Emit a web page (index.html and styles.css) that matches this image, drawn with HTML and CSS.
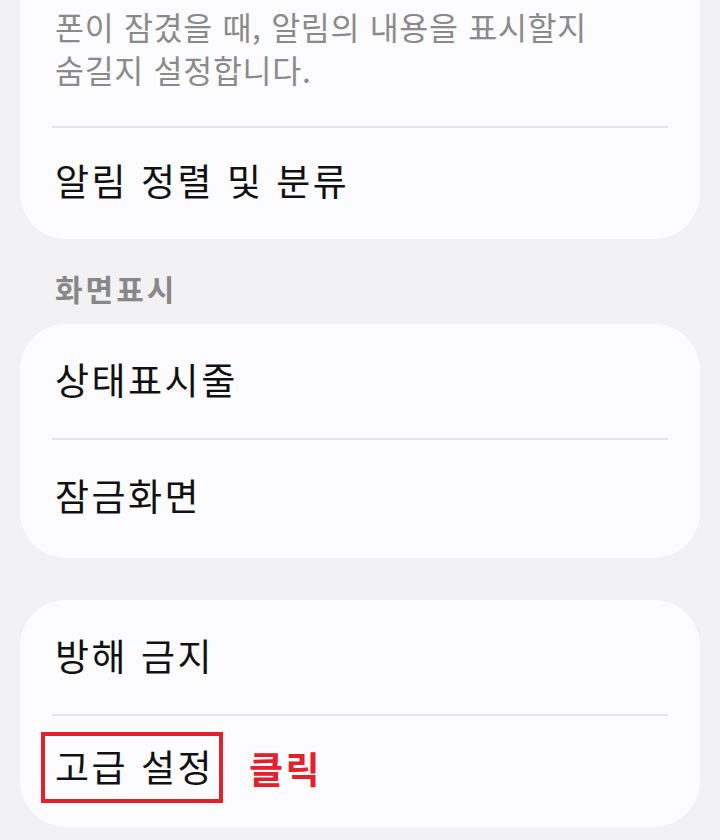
FILE: index.html
```html
<!DOCTYPE html>
<html lang="ko">
<head>
    <meta charset="UTF-8">
    <meta name="viewport" content="width=device-width, initial-scale=1.0">
    <title>알림 설정</title>
    <link rel="stylesheet" href="styles.css">
</head>
<body>
    <div class="screen">
        <section class="card card-top">
            <p class="desc">폰이 잠겼을 때, 알림의 내용을 표시할지<br>숨길지 설정합니다.</p>
            <div class="divider"></div>
            <div class="row row-short">알림 정렬 및 분류</div>
        </section>

        <h2 class="group-title">화면표시</h2>
        <section class="card">
            <div class="row">상태표시줄</div>
            <div class="divider"></div>
            <div class="row">잠금화면</div>
        </section>

        <section class="card card-gap">
            <div class="row">방해 금지</div>
            <div class="divider"></div>
            <div class="row row-short">
                <span class="highlight">고급 설정</span>
                <span class="click-note">클릭</span>
            </div>
        </section>
    </div>
</body>
</html>
```

FILE: styles.css
```css
body {
    margin: 0;
    background-color: #f2f2f4;
    font-family: "Noto Sans CJK KR", "Noto Sans", sans-serif;
}
.screen {
    padding: 0 20px;
}
.card {
    background-color: #fcfcfe;
    border-radius: 46px;
    padding-bottom: 4px;
}
.card-top {
    border-top-left-radius: 0;
    border-top-right-radius: 0;
    padding-top: 5px;
}
.card-gap {
    margin-top: 42px;
}
.desc {
    margin: 0;
    padding: 0 30px 35px 35px;
    font-size: 31.5px;
    letter-spacing: 0.7px;
    line-height: 43px;
    color: #8a8a8a;
}
.divider {
    height: 2px;
    margin: 0 32px;
    background-color: #e5e5e7;
}
.row {
    box-sizing: border-box;
    height: 114px;
    display: flex;
    align-items: center;
    padding: 0 35px 4px;
    font-size: 37px;
    letter-spacing: 2.5px;
    color: #111;
}
.row-short {
    height: 107px;
}
.group-title {
    margin: 29px 0 16px;
    padding-left: 35px;
    font-size: 30px;
    letter-spacing: 3px;
    line-height: 40px;
    font-weight: bold;
    color: #888;
}
.highlight {
    display: inline-block;
    line-height: 44px;
    padding: 8px 5px 11px 10px;
    margin-left: -14px;
    border: 4px solid #e3202b;
}
.click-note {
    margin-left: 26px;
    font-weight: bold;
    color: #e3202b;
}
```
